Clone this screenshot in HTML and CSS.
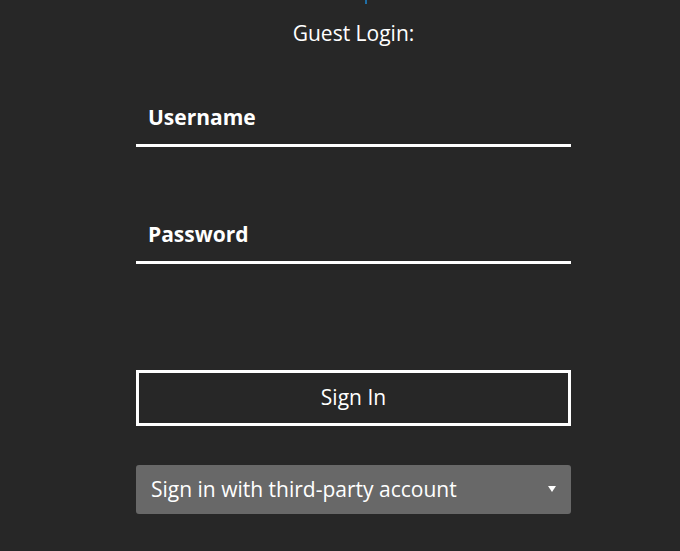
FILE: index.html
```html
<!DOCTYPE html>
<html lang="en">
<head>
<meta charset="utf-8">
<title>Guest Login</title>
<link rel="stylesheet" href="styles.css">
</head>
<body>
<div class="page">
  <div class="top-mark"><span class="mark-line"></span></div>
  <div class="login">
    <div class="guest-title">Guest Login:</div>
    <div class="field field-user">
      <span class="field-label">Username</span>
    </div>
    <div class="field field-pass">
      <span class="field-label">Password</span>
    </div>
    <button class="btn-signin" type="button">Sign In</button>
    <div class="select-third">
      <span class="select-text">Sign in with third-party account</span>
      <svg class="select-arrow" width="8" height="6" viewBox="0 0 8 6"><path d="M0 0H8L4 6Z" fill="#ffffff"/></svg>
    </div>
  </div>
</div>
</body>
</html>
```

FILE: styles.css
```css
html, body {
  margin: 0;
  padding: 0;
  background: #272727;
}
body {
  font-family: "Open Sans", "Liberation Sans", sans-serif;
  color: #ffffff;
}
.page {
  width: 680px;
  height: 551px;
  overflow: hidden;
}
.top-mark {
  height: 4px;
  display: flex;
  padding-left: 365px;
}
.mark-line {
  width: 2px;
  height: 4px;
  background: #1f6ea6;
}
.login {
  width: 435px;
  margin-left: 136px;
  display: flex;
  flex-direction: column;
}
.guest-title {
  margin-top: 15px;
  font-size: 21px;
  line-height: 28px;
  text-align: center;
}
.field {
  border-bottom: 3px solid #ffffff;
  padding: 0 12px 13px 12px;
}
.field-user {
  margin-top: 56px;
}
.field-pass {
  margin-top: 73px;
}
.field-label {
  display: block;
  font-size: 21px;
  line-height: 28px;
  font-weight: 700;
}
.btn-signin {
  margin-top: 106px;
  height: 56px;
  border: 3px solid #ffffff;
  background: transparent;
  color: #ffffff;
  font-family: inherit;
  font-size: 21px;
  line-height: 28px;
  padding: 0 0 2px 0;
}
.select-third {
  box-sizing: border-box;
  margin-top: 39px;
  height: 49px;
  background: #686868;
  border-radius: 3px;
  display: flex;
  align-items: center;
  justify-content: space-between;
  padding: 0 15px 2px 15px;
}
.select-text {
  font-size: 21px;
  line-height: 28px;
}
.select-arrow {
  display: block;
}
```
